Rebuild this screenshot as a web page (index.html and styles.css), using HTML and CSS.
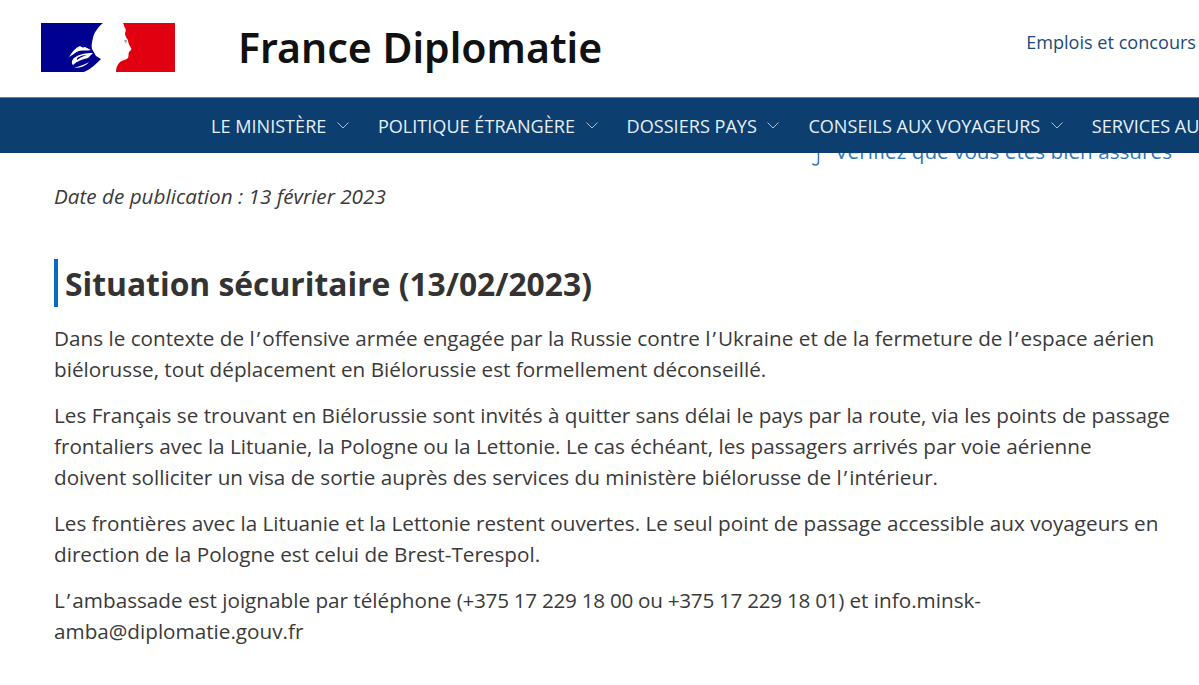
FILE: index.html
```html
<!DOCTYPE html>
<html lang="fr">
<head>
    <title>France Diplomatie</title>
    <link rel="stylesheet" href="styles.css">
</head>
<body>
<header class="site-header">
  <div class="brand">
    <svg class="logo" width="134" height="49" viewBox="0 0 134 49" xmlns="http://www.w3.org/2000/svg">
      <path d="M0 0H62C57 4 53 10 52 15C51 19 50 23 51 26L55 33L60 36C55 41 50 46 43 49H0Z" fill="#000091"/>
      <path d="M82 0H134V49H75C75 45 76 42 79 39C82 37 85 37 87 35C88 33 87 31 88 29C90 27 91 26 90 25C88 22 87 19 87 17C85 15 84 12 84 10C85 8 85 6 84 5C83 3 83 2 82 0Z" fill="#e1000f"/>
      <path d="M39 23C34 25 31 29 28 34C32 32 35 29 38 28C42 27 46 28 50 27L44 24C42 25 40 24 39 23Z" fill="#fff"/>
      <path d="M52 30C45 30 38 31 33 35C31 37 30 40 32 42C36 38 42 36 47 35Z" fill="#fff"/>
      <path d="M33 45C38 43 43 42 48 39C46 42 40 45 33 45Z" fill="#fff"/>
      <path d="M36 35C39 33 42 32 46 32C43 33 40 34 36 37ZM33 31C36 29 39 28 42 28C39 29 36 31 33 33Z" fill="#000091"/>
      <path d="M83 17L86 17L85 21Z" fill="#9a9ab0"/>
    </svg>
    <span class="brand-name">France Diplomatie</span>
  </div>
  <a class="top-link" href="#">Emplois et concours</a>
</header>

<nav class="main-nav">
  <a href="#">LE MINISTÈRE <svg class="chev" width="12" height="7" viewBox="0 0 12 7"><path d="M.5.5 6 6 11.5.5"/></svg></a>
  <a href="#">POLITIQUE ÉTRANGÈRE <svg class="chev" width="12" height="7" viewBox="0 0 12 7"><path d="M.5.5 6 6 11.5.5"/></svg></a>
  <a href="#">DOSSIERS PAYS <svg class="chev" width="12" height="7" viewBox="0 0 12 7"><path d="M.5.5 6 6 11.5.5"/></svg></a>
  <a href="#">CONSEILS AUX VOYAGEURS <svg class="chev" width="12" height="7" viewBox="0 0 12 7"><path d="M.5.5 6 6 11.5.5"/></svg></a>
  <a href="#">SERVICES AU</a>
</nav>

<main class="content">
  <p class="behind-nav"><a href="#"><svg class="hook" width="8" height="14" viewBox="0 0 8 14"><path d="M6.5 0V10C6.5 12 5 13 3.500 13C2 13 1 12.500 .5 11.500"/></svg>Vérifiez que vous êtes bien assurés</a></p>
  <p class="pub-date">Date de publication : 13 février 2023</p>
  <h2>Situation sécuritaire (13/02/2023)</h2>
  <p>Dans le contexte de l<span class="apos">’</span>offensive armée engagée par la Russie contre l<span class="apos">’</span>Ukraine et de la fermeture de l<span class="apos">’</span>espace aérien<br>biélorusse, tout déplacement en Biélorussie est formellement déconseillé.</p>
  <p>Les Français se trouvant en Biélorussie sont invités à quitter sans délai le pays par la route, via les points de passage frontaliers avec la Lituanie, la Pologne ou la Lettonie. Le cas échéant, les passagers arrivés par voie aérienne<br>doivent solliciter un visa de sortie auprès des services du ministère biélorusse de l<span class="apos">’</span>intérieur.</p>
  <p>Les frontières avec la Lituanie et la Lettonie restent ouvertes. Le seul point de passage accessible aux voyageurs en direction de la Pologne est celui de Brest-Terespol.</p>
  <p>L<span class="apos">’</span>ambassade est joignable par téléphone <span class="phones">(+375 17 229 18 00 ou +375 17 229 18 01)</span> et info.minsk-<br>amba@diplomatie.gouv.fr</p>
</main>
</body>
</html>
```

FILE: styles.css
```css
html, body {
  height: 100%;
  margin: 0;
  overflow: hidden;
}
body {
  font-family: "Open Sans", "Noto Sans", sans-serif;
  color: #3a3a3a;
  background: #fff;
}
a {
  text-decoration: none;
}

.site-header {
  height: 97px;
  display: flex;
  justify-content: space-between;
  padding: 0 3px 0 41px;
}
.brand {
  display: flex;
  align-items: flex-start;
  gap: 63px;
}
.logo {
  margin-top: 23px;
}
.brand-name {
  margin-top: 19px;
  font-family: "Noto Sans", sans-serif;
  font-size: 41px;
  line-height: 57px;
  font-weight: 600;
  color: #111;
}
.top-link {
  margin-top: 29px;
  font-size: 18.1px;
  line-height: 26px;
  color: #1d4a78;
}

.main-nav {
  position: relative;
  z-index: 2;
  height: 56px;
  box-sizing: border-box;
  border-top: 1px solid #5d86a8;
  background: #0c3f70;
  display: flex;
  align-items: center;
  gap: 29px;
  padding-left: 211px;
  white-space: nowrap;
  overflow: hidden;
}
.main-nav a {
  display: flex;
  align-items: center;
  gap: 10.5px;
  color: #e6eff6;
  font-size: 18.1px;
}
.chev {
  fill: none;
  stroke: #a9c0d4;
  stroke-width: 1;
}

.content {
  padding: 0 27px 0 54px;
  font-size: 20.7px;
  line-height: 30.7px;
}
.content p {
  margin: 0 0 15.6px;
}
.content .behind-nav {
  margin: -17px 0 0;
  text-align: right;
}
.behind-nav a {
  color: #2f77b8;
}
.hook {
  margin-right: 15px;
  vertical-align: -7px;
  fill: none;
  stroke: #2f77b8;
  stroke-width: 1.5;
}
.content .pub-date {
  margin: 14px 0 48px;
  font-style: italic;
}
.content h2 {
  margin: 0 0 16px;
  padding: 1px 0 0 7px;
  border-left: 4px solid #0b6bc4;
  font-size: 31.8px;
  line-height: 47px;
  font-weight: 700;
  color: #333;
}
.apos {
  margin: 0 2px;
}
.phones {
  letter-spacing: -0.28px;
}
```
